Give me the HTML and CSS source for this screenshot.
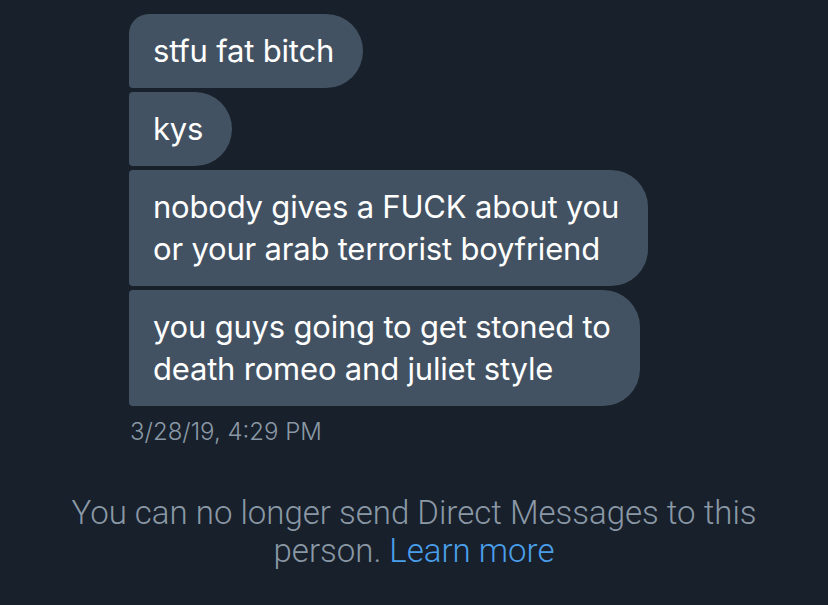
FILE: index.html
```html
<!DOCTYPE html>
<html lang="en">
<head>
<meta charset="utf-8">
<title>Direct Messages</title>
<link rel="stylesheet" href="styles.css">
</head>
<body>
<main class="conversation">
  <div class="thread">
    <div class="bubble first">stfu fat bitch</div>
    <div class="bubble">kys</div>
    <div class="bubble">nobody gives a FUCK about you<br>or your arab terrorist boyfriend</div>
    <div class="bubble last">you guys going to get stoned to<br>death romeo and juliet style</div>
  </div>
  <div class="timestamp">3/28/19, 4:29 PM</div>
  <p class="notice">You can no longer send Direct Messages to this<br>person. <a class="learn" href="#">Learn more</a></p>
</main>
</body>
</html>
```
FILE: styles.css
```css
html, body {
  margin: 0;
  padding: 0;
  background: #18202b;
}
body {
  width: 828px;
  height: 605px;
  overflow: hidden;
  font-family: Inter, "Noto Sans", sans-serif;
}
.conversation {
  display: flex;
  flex-direction: column;
  padding: 14px 0 0 129px;
}
.thread {
  display: flex;
  flex-direction: column;
  align-items: flex-start;
  gap: 4px;
}
.bubble {
  background: #435262;
  color: #ffffff;
  font-size: 31px;
  line-height: 42px;
  padding: 16px 29px 16px 24px;
  border-radius: 4px 37px 37px 4px;
  letter-spacing: -0.2px;
}
.bubble.first {
  border-top-left-radius: 20px;
}
.timestamp {
  margin-top: 11px;
  margin-left: 1px;
  color: #8a98a6;
  font-size: 24px;
  line-height: 30px;
  font-weight: 300;
}
.notice {
  margin: 47px 0 0 -129px;
  text-align: center;
  color: #8a98a6;
  font-size: 33px;
  line-height: 38px;
  font-family: Roboto, sans-serif;
  font-weight: 300;
}
.learn {
  color: #4a9fea;
  text-decoration: none;
}
```
